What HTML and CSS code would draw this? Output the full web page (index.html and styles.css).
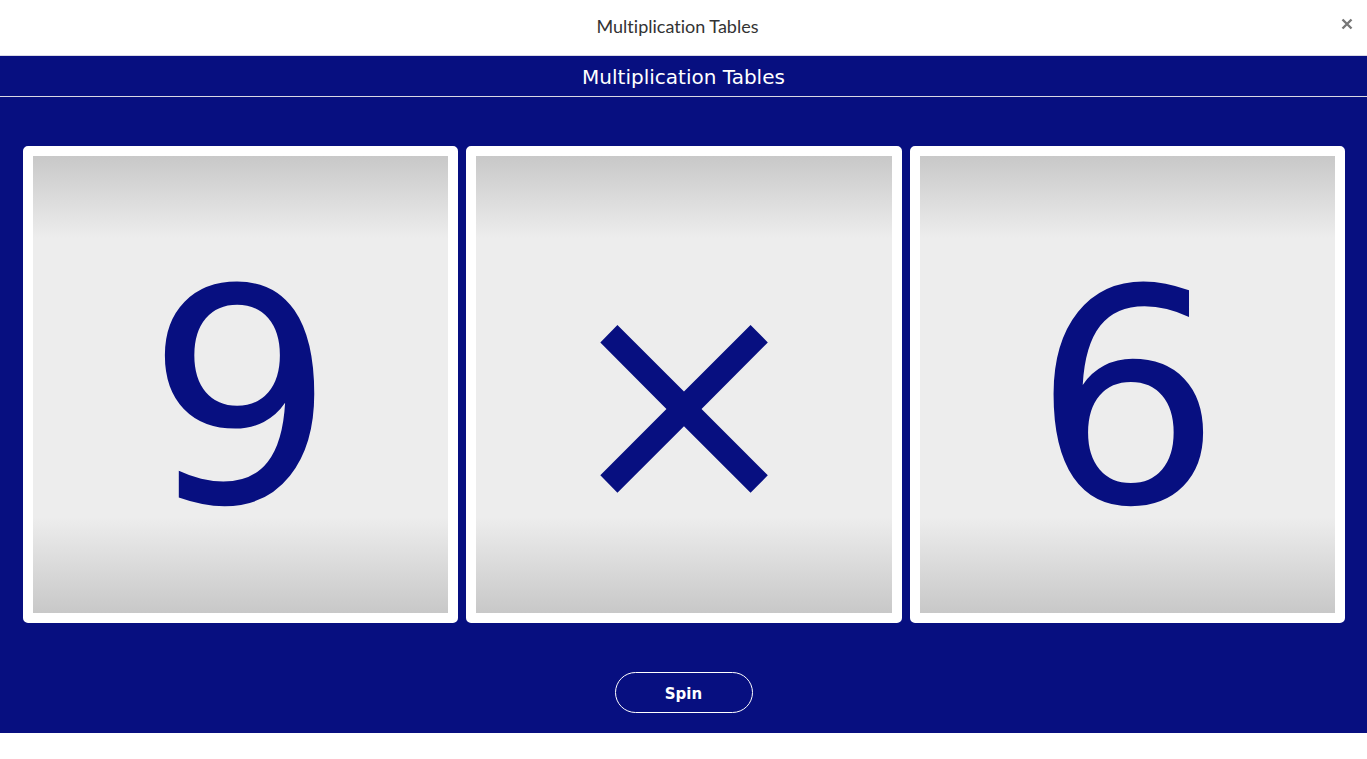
FILE: index.html
```html
<!DOCTYPE html>
<html lang="en">
<head>
<meta charset="utf-8">
<title>Multiplication Tables</title>
<link rel="stylesheet" href="styles.css">
</head>
<body>
  <div class="titlebar">
    <span class="titlebar-text">Multiplication Tables</span>
    <button class="close" aria-label="Close">
      <svg width="12" height="12" viewBox="0 0 12 12"><path d="M1.5 1.5 L10.5 10.5 M10.5 1.5 L1.5 10.5" stroke="#777" stroke-width="2.4" stroke-linecap="butt"/></svg>
    </button>
  </div>
  <main class="app">
    <header class="app-header">Multiplication Tables</header>
    <section class="reels">
      <div class="reel"><div class="reel-face">9</div></div>
      <div class="reel"><div class="reel-face op">×</div></div>
      <div class="reel"><div class="reel-face">6</div></div>
    </section>
    <div class="actions">
      <button class="spin">Spin</button>
    </div>
  </main>
</body>
</html>
```

FILE: styles.css
```css
html, body {
  margin: 0;
  padding: 0;
  background: #ffffff;
}

body {
  font-family: "DejaVu Sans", Verdana, sans-serif;
}

.titlebar {
  height: 56px;
  box-sizing: border-box;
  display: flex;
  align-items: center;
  justify-content: center;
  position: relative;
  border-bottom: 1px solid #d9d9e6;
  padding-right: 12px;
}

.titlebar-text {
  font-family: Lato, "Open Sans", sans-serif;
  font-size: 18px;
  color: #333333;
  margin-top: -4px;
  font-variant-ligatures: none;
}

.close {
  position: absolute;
  right: 14px;
  top: 18px;
  width: 12px;
  height: 12px;
  padding: 0;
  border: 0;
  background: none;
  display: block;
}

.close svg {
  display: block;
}

.app {
  background: #070f80;
  padding-bottom: 20px;
}

.app-header {
  padding-top: 2px;
  line-height: 38px;
  border-bottom: 1px solid #d8d8e4;
  color: #ffffff;
  font-size: 20px;
  text-align: center;
}

.reels {
  display: flex;
  gap: 8px;
  padding: 49px 22px 0 23px;
}

.reel {
  flex: 1;
  height: 477px;
  box-sizing: border-box;
  border: 10px solid #ffffff;
  border-radius: 5px;
  background: #ffffff;
}

.reel-face {
  height: 100%;
  display: flex;
  align-items: center;
  justify-content: center;
  background: linear-gradient(to bottom, #c8c8c8 0%, #ededed 18%, #ededed 79%, #c8c8c8 100%);
  color: #070f80;
  font-size: 297px;
  line-height: 1;
  padding-top: 30px;
  box-sizing: border-box;
}

.actions {
  display: flex;
  justify-content: center;
  padding-top: 49px;
}

.spin {
  width: 138px;
  height: 41px;
  border: 1px solid #ffffff;
  border-radius: 21px;
  background: transparent;
  color: #ffffff;
  font-family: "DejaVu Sans", Verdana, sans-serif;
  font-size: 15px;
  font-weight: 600;
  padding: 2px 0 0;
}
```
